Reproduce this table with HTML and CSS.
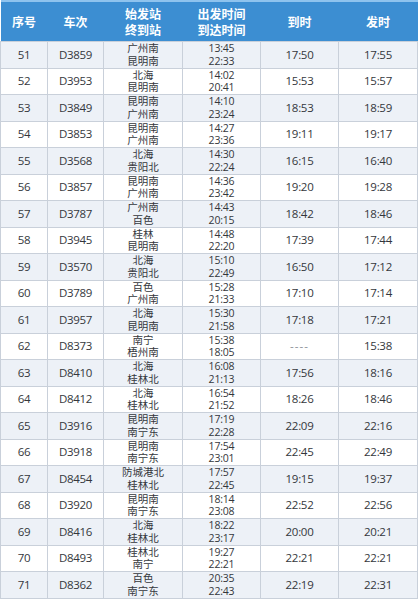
FILE: index.html
```html
<!DOCTYPE html>
<html lang="zh-CN">
<head>
<meta charset="utf-8">
<link rel="stylesheet" href="styles.css">
</head>
<body>
<table class="tt">
<colgroup><col class="c1"><col class="c2"><col class="c3"><col class="c4"><col class="c5"><col class="c6"></colgroup>
<thead>
<tr><th>序号</th><th>车次</th><th><span class="ln">始发站</span><span class="ln">终到站</span></th><th><span class="ln">出发时间</span><span class="ln">到达时间</span></th><th>到时</th><th>发时</th></tr>
</thead>
<tbody>
<tr><td>51</td><td>D3859</td><td class="st"><span>广州南</span><span>昆明南</span></td><td class="tm"><span>13:45</span><span>22:33</span></td><td>17:50</td><td>17:55</td></tr>
<tr><td>52</td><td>D3953</td><td class="st"><span>北海</span><span>昆明南</span></td><td class="tm"><span>14:02</span><span>20:41</span></td><td>15:53</td><td>15:57</td></tr>
<tr><td>53</td><td>D3849</td><td class="st"><span>昆明南</span><span>广州南</span></td><td class="tm"><span>14:10</span><span>23:24</span></td><td>18:53</td><td>18:59</td></tr>
<tr><td>54</td><td>D3853</td><td class="st"><span>昆明南</span><span>广州南</span></td><td class="tm"><span>14:27</span><span>23:36</span></td><td>19:11</td><td>19:17</td></tr>
<tr><td>55</td><td>D3568</td><td class="st"><span>北海</span><span>贵阳北</span></td><td class="tm"><span>14:30</span><span>22:24</span></td><td>16:15</td><td>16:40</td></tr>
<tr><td>56</td><td>D3857</td><td class="st"><span>昆明南</span><span>广州南</span></td><td class="tm"><span>14:36</span><span>23:42</span></td><td>19:20</td><td>19:28</td></tr>
<tr><td>57</td><td>D3787</td><td class="st"><span>广州南</span><span>百色</span></td><td class="tm"><span>14:43</span><span>20:15</span></td><td>18:42</td><td>18:46</td></tr>
<tr><td>58</td><td>D3945</td><td class="st"><span>桂林</span><span>昆明南</span></td><td class="tm"><span>14:48</span><span>22:20</span></td><td>17:39</td><td>17:44</td></tr>
<tr><td>59</td><td>D3570</td><td class="st"><span>北海</span><span>贵阳北</span></td><td class="tm"><span>15:10</span><span>22:49</span></td><td>16:50</td><td>17:12</td></tr>
<tr><td>60</td><td>D3789</td><td class="st"><span>百色</span><span>广州南</span></td><td class="tm"><span>15:28</span><span>21:33</span></td><td>17:10</td><td>17:14</td></tr>
<tr><td>61</td><td>D3957</td><td class="st"><span>北海</span><span>昆明南</span></td><td class="tm"><span>15:30</span><span>21:58</span></td><td>17:18</td><td>17:21</td></tr>
<tr><td>62</td><td>D8373</td><td class="st"><span>南宁</span><span>梧州南</span></td><td class="tm"><span>15:38</span><span>18:05</span></td><td class="dash">----</td><td>15:38</td></tr>
<tr><td>63</td><td>D8410</td><td class="st"><span>北海</span><span>桂林北</span></td><td class="tm"><span>16:08</span><span>21:13</span></td><td>17:56</td><td>18:16</td></tr>
<tr><td>64</td><td>D8412</td><td class="st"><span>北海</span><span>桂林北</span></td><td class="tm"><span>16:54</span><span>21:52</span></td><td>18:26</td><td>18:46</td></tr>
<tr><td>65</td><td>D3916</td><td class="st"><span>昆明南</span><span>南宁东</span></td><td class="tm"><span>17:19</span><span>22:28</span></td><td>22:09</td><td>22:16</td></tr>
<tr><td>66</td><td>D3918</td><td class="st"><span>昆明南</span><span>南宁东</span></td><td class="tm"><span>17:54</span><span>23:01</span></td><td>22:45</td><td>22:49</td></tr>
<tr><td>67</td><td>D8454</td><td class="st"><span>防城港北</span><span>桂林北</span></td><td class="tm"><span>17:57</span><span>22:45</span></td><td>19:15</td><td>19:37</td></tr>
<tr><td>68</td><td>D3920</td><td class="st"><span>昆明南</span><span>南宁东</span></td><td class="tm"><span>18:14</span><span>23:08</span></td><td>22:52</td><td>22:56</td></tr>
<tr><td>69</td><td>D8416</td><td class="st"><span>北海</span><span>桂林北</span></td><td class="tm"><span>18:22</span><span>23:17</span></td><td>20:00</td><td>20:21</td></tr>
<tr><td>70</td><td>D8493</td><td class="st"><span>桂林北</span><span>南宁</span></td><td class="tm"><span>19:27</span><span>22:21</span></td><td>22:21</td><td>22:21</td></tr>
<tr><td>71</td><td>D8362</td><td class="st"><span>百色</span><span>南宁东</span></td><td class="tm"><span>20:35</span><span>22:43</span></td><td>22:19</td><td>22:31</td></tr>
</tbody>
</table>
</body>
</html>
```

FILE: styles.css
```css
html, body {
  margin: 0;
  padding: 0;
  background: #ffffff;
}
.tt {
  border-collapse: collapse;
  table-layout: fixed;
  width: 417px;
  font-family: "Open Sans", "Noto Sans CJK SC", sans-serif;
  color: #34373c;
}
.c1 { width: 47px; }
.c2 { width: 56px; }
.c3 { width: 79px; }
.c4 { width: 78px; }
.c5 { width: 78px; }
.c6 { width: 79px; }
.tt thead th {
  background: #3c8ed2;
  color: #ffffff;
  font-family: "Noto Sans CJK SC", sans-serif;
  font-weight: 700;
  font-size: 12px;
  line-height: 16px;
  height: 39px;
  padding: 0;
  border-top: 2px solid #8ec3ee;
  text-align: center;
  vertical-align: middle;
}
.tt thead th .ln {
  display: block;
  height: 16px;
}
.tt tbody td {
  height: 25.5px;
  padding: 0;
  border: 1px solid #c9d0da;
  text-align: center;
  vertical-align: middle;
  font-size: 11.5px;
  line-height: 14px;
  letter-spacing: -0.3px;
}
.tt tbody td.st span,
.tt tbody td.tm span {
  display: block;
  height: 12.75px;
  line-height: 12.75px;
  overflow: visible;
}
.tt tbody td.st {
  font-family: "Noto Sans CJK SC", sans-serif;
  font-size: 10.5px;
  letter-spacing: 0;
}
.tt tbody td.tm {
  font-size: 10.5px;
  letter-spacing: -0.2px;
}
.tt tbody tr:nth-child(odd) td {
  background: #edf1f7;
}
.tt tbody td.dash {
  color: #8a8f96;
  letter-spacing: 1px;
}
```
